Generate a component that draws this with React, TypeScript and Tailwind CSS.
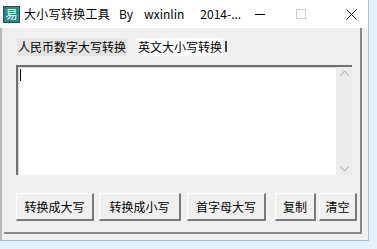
import React from 'react';

const font = { fontFamily: '"Noto Sans CJK SC", "Liberation Sans", sans-serif' };

// classic raised button: light top/left, dark bottom/right
const Btn: React.FC<{ label: string; w: string }> = ({ label, w }) => (
  <button
    className={`${w} h-[28px] flex items-center justify-center text-[12px] text-black bg-[#f0f0f0] border-t border-l border-t-white border-l-white border-r-2 border-b-2 border-r-[#7a7a7a] border-b-[#7a7a7a]`}
  >
    {label}
  </button>
);

const App: React.FC = () => {
  return (
    <div className="w-[377px] h-[249px] bg-[#e6f1fb] overflow-hidden" style={font}>
      <div className="w-[369px] h-[241px] flex flex-col bg-white border-r border-b border-r-[#9fc5ea] border-b-[#9fc5ea]">
        {/* title bar */}
        <div className="h-[28px] flex items-center bg-white">
          <div className="ml-[3px] w-[17px] h-[17px] bg-[#2f8a86] border border-[#20504e] flex items-center justify-center text-white text-[12px] leading-none">
            易
          </div>
          <div className="ml-[4px] flex items-center text-[12px] text-black whitespace-nowrap">
            <span className="tracking-[0.3px]">大小写转换工具</span>
            <span className="ml-[9px]">By</span>
            <span className="ml-[11px]">wxinlin</span>
            <span className="ml-[16px]">2014-...</span>
          </div>
          <div className="ml-auto flex items-center h-full">
            <div className="w-[34px] h-full flex items-center justify-center">
              <div className="w-[10px] h-px bg-black" />
            </div>
            <div className="w-[7px]" />
            <div className="w-[34px] h-full flex items-center justify-center">
              <div className="w-[10px] h-[10px] border border-[#cfcfcf]" />
            </div>
            <div className="w-[16px]" />
            <div className="w-[34px] h-full flex items-center justify-center">
              <svg width="11" height="11" viewBox="0 0 11 11">
                <path d="M0.5 0.5 L10.5 10.5 M10.5 0.5 L0.5 10.5" stroke="#000" strokeWidth="1" />
              </svg>
            </div>
          </div>
        </div>

        {/* client area */}
        <div className="flex-1 flex bg-[#f0f0f0] border-l-2 border-l-[#b8b8b8]">
          <div className="flex-1 flex flex-col ml-[2px] mr-[6px] mb-[6px] border-r-2 border-b-2 border-r-[#8a8a8a] border-b-[#8a8a8a] pb-[11px]">
            {/* tabs */}
            <div className="h-[37px] flex items-center pl-[13px] text-[12px] text-black">
              <span className="bg-[#e4e4e4] px-[1px]">人民币数字大写转换</span>
              <span className="ml-[10px] bg-white px-[1px]">英文大小写转换</span>
              <div className="ml-[2px] w-[2px] h-[11px] bg-[#444]" />
            </div>

            {/* text area */}
            <div className="ml-[12px] mr-[8px] h-[110px] flex bg-white border-t-2 border-l-2 border-t-[#707070] border-l-[#707070]">
              <div className="flex-1 relative border-t border-l border-t-[#d8d8d8] border-l-[#d8d8d8]">
                <div className="absolute left-[1px] top-[1px] w-px h-[12px] bg-black" />
              </div>
              <div className="w-[16px] flex flex-col items-center justify-between bg-[#ececec] py-[3px]">
                <svg width="9" height="6" viewBox="0 0 9 6">
                  <path d="M0.5 5.5 L4.5 1 L8.5 5.5" fill="none" stroke="#a0a0a0" />
                </svg>
                <svg width="9" height="6" viewBox="0 0 9 6">
                  <path d="M0.5 0.5 L4.5 5 L8.5 0.5" fill="none" stroke="#a0a0a0" />
                </svg>
              </div>
            </div>

            <div className="flex-1" />

            {/* buttons */}
            <div className="flex items-center pl-[12px] text-black">
              <Btn label="转换成大写" w="w-[78px]" />
              <div className="w-[5px]" />
              <Btn label="转换成小写" w="w-[82px]" />
              <div className="w-[6px]" />
              <Btn label="首字母大写" w="w-[79px]" />
              <div className="w-[9px]" />
              <Btn label="复制" w="w-[41px]" />
              <div className="w-[3px]" />
              <Btn label="清空" w="w-[38px]" />
            </div>
          </div>
        </div>
      </div>
    </div>
  );
};

export default App;
